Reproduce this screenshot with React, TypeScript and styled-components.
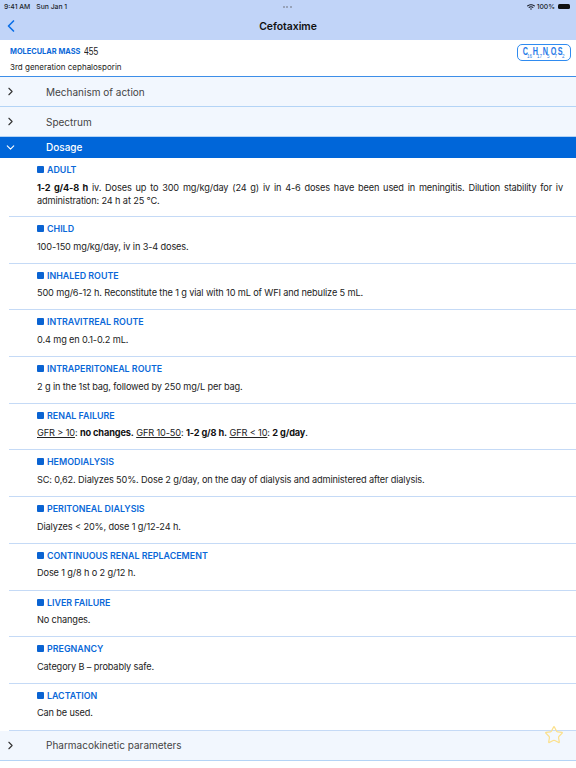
import { createGlobalStyle } from "styled-components";
import styled from "styled-components";
import { ChevronLeft, ChevronRight, ChevronDown, Star } from "lucide-react";
import { FaWifi } from "react-icons/fa";

const GlobalStyle = createGlobalStyle`
  html, body {
    margin: 0;
    padding: 0;
    background: #fff;
    font-family: "Inter", "Liberation Sans", sans-serif;
    color: #222;
  }
`;

const Page = styled.div`
  width: 576px;
  height: 768px;
  overflow: hidden;
  position: relative;
  background: #fff;
`;

const TopBar = styled.header`
  height: 40px;
  background: #c1d4f8;
  display: flex;
  flex-direction: column;
`;

const StatusBar = styled.div`
  height: 12px;
  box-sizing: border-box;
  padding: 1px 6px 0 4px;
  display: flex;
  align-items: center;
  justify-content: space-between;
  font-size: 6.8px;
  font-weight: 500;
  color: #1b1f2a;
`;

const StatusLeft = styled.div`
  display: flex;
  gap: 6px;
  width: 120px;
`;

const StatusRight = styled.div`
  width: 120px;
  display: flex;
  justify-content: flex-end;
  align-items: center;
  gap: 2px;
`;

const Dots = styled.div`
  display: flex;
  gap: 1.5px;
`;

const Dot = styled.span`
  width: 2px;
  height: 2px;
  border-radius: 50%;
  background: #8a93a6;
`;

const Battery = styled.span`
  width: 12px;
  height: 5.5px;
  border-radius: 1.5px;
  background: #111;
  margin-left: 1px;
`;

const NavBar = styled.div`
  flex: 1;
  display: grid;
  grid-template-columns: 40px 1fr 40px;
  align-items: center;
  color: #0a6fe8;
`;

const NavTitle = styled.h1`
  margin: 0;
  text-align: center;
  font-size: 10.4px;
  font-weight: 600;
  color: #111;
`;

const Info = styled.section`
  height: 37px;
  box-sizing: border-box;
  padding: 5px 5px 0 10px;
  display: flex;
  justify-content: space-between;
  border-bottom: 1.5px solid #3d8ee8;
`;

const InfoText = styled.div`
  display: flex;
  flex-direction: column;
  gap: 5px;
`;

const MassLine = styled.div`
  display: flex;
  align-items: center;
  gap: 4px;
  height: 12px;
`;

const MassLabel = styled.span`
  font-size: 7.4px;
  font-weight: 700;
  color: #0a68d8;
`;

const MassValue = styled.span`
  font-family: "Liberation Sans", sans-serif;
  font-size: 10px;
  display: inline-block;
  transform: scaleX(0.85);
  transform-origin: left;
`;

const ClassLine = styled.div`
  font-size: 8px;
  color: #222;
`;

const Formula = styled.div`
  width: 54px;
  height: 17px;
  box-sizing: border-box;
  border: 1px solid #2f8bf0;
  border-radius: 5px;
  margin-top: -1px;
  padding-left: 4px;
  display: flex;
  align-items: flex-start;
  color: #1f7ae8;
  font-family: "Liberation Sans", sans-serif;
`;

const Atom = styled.span`
  display: block;
  white-space: nowrap;
  font-size: 10px;
  line-height: 13px;
  font-weight: 700;
`;

const AtomLetter = styled.span`
  display: inline-block;
  transform: scaleX(0.72);
  width: 5px;
  text-align: center;
`;

const AtomCount = styled.span`
  display: inline-block;
  font-size: 4.5px;
  line-height: 0;
  font-weight: 400;
  vertical-align: -3px;
`;

const Row = styled.div<{ $open?: boolean }>`
  height: ${({ $open }) => ($open ? "21px" : "30px")};
  box-sizing: border-box;
  display: grid;
  grid-template-columns: 46px 1fr;
  align-items: center;
  font-size: 10px;
  font-weight: ${({ $open }) => ($open ? 500 : 400)};
  color: ${({ $open }) => ($open ? "#fff" : "#444")};
  background: ${({ $open }) => ($open ? "#0066d9" : "#f2f7fe")};
  border-bottom: 1px solid ${({ $open }) => ($open ? "#0066d9" : "#b4d4f6")};
`;

const RowIcon = styled.span`
  display: flex;
  padding-left: 3.5px;
`;

const Item = styled.article<{ $tall?: boolean }>`
  height: ${({ $tall }) => ($tall ? "59px" : "46.7px")};
  box-sizing: border-box;
  padding-top: 6px;
  margin-left: 9px;
  border-bottom: 1px solid #c5daf6;
`;

const ItemTitle = styled.h3`
  margin: 0 0 5.5px 28px;
  display: flex;
  align-items: center;
  gap: 3px;
  height: 11px;
  font-size: 8.9px;
  font-weight: 600;
  color: #0a68d8;
`;

const Square = styled.span`
  width: 7px;
  height: 7px;
  border-radius: 1px;
  background: #0a63d2;
`;

const ItemBody = styled.p`
  margin: 0 13px 0 28px;
  font-size: 9.2px;
  letter-spacing: -0.13px;
  line-height: 13px;
  text-align: justify;
  color: #222;

  b {
    font-weight: 700;
    color: #111;
  }

  u {
    text-underline-offset: 1px;
  }
`;

const Favorite = styled.button`
  position: absolute;
  right: 12px;
  top: 725px;
  padding: 0;
  border: 0;
  background: none;
  display: flex;
  color: #fbe08c;
`;

const atoms = [
  ["C", "16"],
  ["H", "17"],
  ["N", "5"],
  ["O", "7"],
  ["S", "2"],
];

const sections = [
  { title: "CHILD", body: <>100-150 mg/kg/day, iv in 3-4 doses.</> },
  { title: "INHALED ROUTE", body: <>500 mg/6-12 h. Reconstitute the 1 g vial with 10 mL of WFI and nebulize 5 mL.</> },
  { title: "INTRAVITREAL ROUTE", body: <>0.4 mg en 0.1-0.2 mL.</> },
  { title: "INTRAPERITONEAL ROUTE", body: <>2 g in the 1st bag, followed by 250 mg/L per bag.</> },
  {
    title: "RENAL FAILURE",
    body: (
      <>
        <u>GFR &gt; 10</u>: <b>no changes.</b> <u>GFR 10-50</u>: <b>1-2 g/8 h.</b> <u>GFR &lt; 10</u>: <b>2 g/day</b>.
      </>
    ),
  },
  { title: "HEMODIALYSIS", body: <>SC: 0,62. Dialyzes 50%. Dose 2 g/day, on the day of dialysis and administered after dialysis.</> },
  { title: "PERITONEAL DIALYSIS", body: <>Dialyzes &lt; 20%, dose 1 g/12-24 h.</> },
  { title: "CONTINUOUS RENAL REPLACEMENT", body: <>Dose 1 g/8 h o 2 g/12 h.</> },
  { title: "LIVER FAILURE", body: <>No changes.</> },
  { title: "PREGNANCY", body: <>Category B – probably safe.</> },
  { title: "LACTATION", body: <>Can be used.</> },
];

export default function App() {
  return (
    <Page>
      <GlobalStyle />
      <TopBar>
        <StatusBar>
          <StatusLeft>
            <span>9:41 AM</span>
            <span>Sun Jan 1</span>
          </StatusLeft>
          <Dots>
            <Dot />
            <Dot />
            <Dot />
          </Dots>
          <StatusRight>
            <FaWifi size={8} />
            <span>100%</span>
            <Battery />
          </StatusRight>
        </StatusBar>
        <NavBar>
          <ChevronLeft size={20} strokeWidth={2} style={{ marginLeft: 1 }} />
          <NavTitle>Cefotaxime</NavTitle>
        </NavBar>
      </TopBar>

      <Info>
        <InfoText>
          <MassLine>
            <MassLabel>MOLECULAR MASS</MassLabel>
            <MassValue>455</MassValue>
          </MassLine>
          <ClassLine>3rd generation cephalosporin</ClassLine>
        </InfoText>
        <Formula>
          {atoms.map(([letter, count]) => (
            <Atom key={letter}>
              <AtomLetter>{letter}</AtomLetter>
              <AtomCount>{count}</AtomCount>
            </Atom>
          ))}
        </Formula>
      </Info>

      <Row>
        <RowIcon>
          <ChevronRight size={13} strokeWidth={2} color="#333" />
        </RowIcon>
        Mechanism of action
      </Row>
      <Row>
        <RowIcon>
          <ChevronRight size={13} strokeWidth={2} color="#333" />
        </RowIcon>
        Spectrum
      </Row>
      <Row $open>
        <RowIcon>
          <ChevronDown size={13} strokeWidth={2} />
        </RowIcon>
        Dosage
      </Row>

      <Item $tall>
        <ItemTitle>
          <Square />
          ADULT
        </ItemTitle>
        <ItemBody>
          <b>1-2 g/4-8 h</b> iv. Doses up to 300 mg/kg/day (24 g) iv in 4-6 doses have been used in meningitis. Dilution stability for iv administration: 24 h at 25 °C.
        </ItemBody>
      </Item>
      {sections.map((s) => (
        <Item key={s.title}>
          <ItemTitle>
            <Square />
            {s.title}
          </ItemTitle>
          <ItemBody>{s.body}</ItemBody>
        </Item>
      ))}

      <Row>
        <RowIcon>
          <ChevronRight size={13} strokeWidth={2} color="#333" />
        </RowIcon>
        Pharmacokinetic parameters
      </Row>

      <Favorite aria-label="Favorite">
        <Star size={20} strokeWidth={1.5} />
      </Favorite>
    </Page>
  );
}
